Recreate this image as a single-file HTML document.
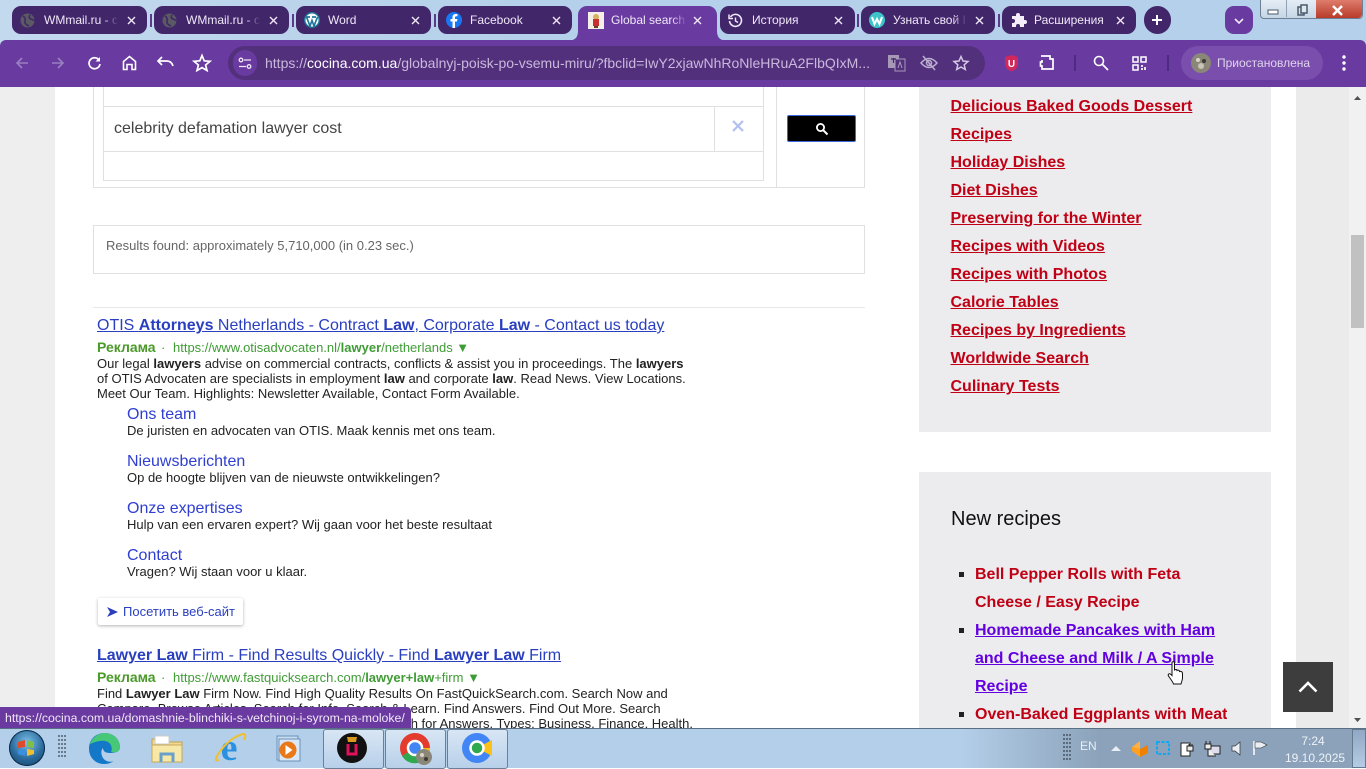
<!DOCTYPE html>
<html lang="en"><head><meta charset="utf-8"><title>Global search</title>
<style>
html,body{margin:0;padding:0;width:1366px;height:768px;overflow:hidden;background:#fff;font-family:"Liberation Sans","Noto Sans CJK SC",sans-serif}
.a{position:absolute}
.t{position:absolute;white-space:nowrap;line-height:20px}
svg{position:absolute;overflow:visible}
.tab{position:absolute;top:6px;height:28px;background:#42266a;border-radius:9px}
.tt{position:absolute;top:13px;height:15px;white-space:nowrap;overflow:hidden;font-size:12px;color:#f0e8f8;line-height:15px}
.fd{-webkit-mask-image:linear-gradient(90deg,#000 80%,transparent);mask-image:linear-gradient(90deg,#000 80%,transparent)}
.x{position:absolute;font-size:0}
.sep{position:absolute;top:14px;width:2px;height:13px;background:#5a3a8a}
.side{position:absolute;left:950.5px;font-size:16px;font-weight:bold;color:#c00014;text-decoration:underline;white-space:nowrap;line-height:20px}
.li{position:absolute;left:975px;font-size:16px;font-weight:bold;color:#c00014;white-space:nowrap;line-height:20px}
.bl{position:absolute;width:5px;height:5px;background:#222;left:959px}
.ad{position:absolute;left:97px;font-size:13px;color:#222;white-space:nowrap;line-height:15px}
.ttl{position:absolute;left:97px;font-size:16px;color:#2a3fc0;text-decoration:underline;white-space:nowrap;line-height:20px}
.gr{position:absolute;left:97px;font-size:13px;color:#3f9c35;white-space:nowrap;line-height:16px}
.gr b.r{display:inline-block;width:64px;color:#4a9a2a;font-size:14px}
.gr i{display:inline-block;width:12px;font-style:normal}
.sl{position:absolute;left:127px;font-size:16px;color:#2f3fd0;white-space:nowrap;line-height:20px}
.sd{position:absolute;left:127px;font-size:13px;color:#222;white-space:nowrap;line-height:15px}
.bd{position:absolute;background:#e0e0e0}
.tb{position:absolute;top:729px;width:59px;height:38px;border:1px solid #6b7f96;border-radius:3px;background:linear-gradient(#d8e6f4,#b8d0ea)}
</style></head><body>

<!-- page content -->
<div class="a" style="left:0;top:87px;width:55px;height:641px;background:#eeeeee"></div>
<div class="a" style="left:1296px;top:87px;width:53px;height:641px;background:#ebebeb"></div>
<div class="a" style="left:1349px;top:87px;width:17px;height:641px;background:#f1f1f1"></div>
<div class="a" style="left:1351px;top:235px;width:13px;height:93px;background:#c1c1c1"></div>
<svg style="left:1349px;top:87px" width="17" height="641"><path d="M5 13 L8.5 9 L12 13Z" fill="#505050"/><path d="M5 631 L8.5 635 L12 631Z" fill="#505050"/></svg>

<!-- search box -->
<div class="bd" style="left:93px;top:87px;width:1px;height:101px"></div>
<div class="bd" style="left:93px;top:187px;width:772px;height:1px"></div>
<div class="bd" style="left:864px;top:87px;width:1px;height:101px"></div>
<div class="bd" style="left:776px;top:87px;width:1px;height:101px"></div>
<div class="bd" style="left:103px;top:87px;width:1px;height:94px"></div>
<div class="bd" style="left:763px;top:87px;width:1px;height:94px"></div>
<div class="bd" style="left:103px;top:180px;width:661px;height:1px"></div>
<div class="bd" style="left:104px;top:106px;width:660px;height:1px"></div>
<div class="bd" style="left:104px;top:151px;width:660px;height:1px"></div>
<div class="bd" style="left:714px;top:106px;width:1px;height:46px"></div>
<div class="t" style="left:114px;top:118px;font-size:16px;color:#444;line-height:21px">celebrity defamation lawyer cost</div>
<svg style="left:732px;top:120px" width="12" height="12"><path d="M1 1L11 11M11 1L1 11" stroke="#b3c0f0" stroke-width="2.2"/></svg>
<div class="a" style="left:787px;top:115px;width:67px;height:25px;background:#000;border:1px solid #3a68d8;border-radius:2px"></div>
<svg style="left:815px;top:122px" width="14" height="14"><circle cx="5.5" cy="5.5" r="3.6" fill="none" stroke="#fff" stroke-width="1.8"/><path d="M8.2 8.2L12.5 12.5" stroke="#fff" stroke-width="2"/></svg>

<!-- results found -->
<div class="a" style="left:93px;top:225px;width:770px;height:47px;border:1px solid #e0e0e0"></div>
<div class="t" style="left:106px;top:236px;font-size:13px;color:#666">Results found: approximately 5,710,000 (in 0.23 sec.)</div>
<div class="bd" style="left:93px;top:307px;width:772px;height:1px;background:#e8e8e8"></div>

<!-- ad 1 -->
<div class="ttl" style="top:316px">OTIS <b>Attorneys</b> Netherlands - Contract <b>Law</b>, Corporate <b>Law</b> - Contact us today</div>
<div class="gr" style="top:339px"><b class="r">Реклама</b><i>·</i>https://www.otisadvocaten.nl/<b>lawyer</b>/netherlands ▼</div>
<div class="ad" style="top:356px">Our legal <b>lawyers</b> advise on commercial contracts, conflicts &amp; assist you in proceedings. The <b>lawyers</b></div>
<div class="ad" style="top:371px">of OTIS Advocaten are specialists in employment <b>law</b> and corporate <b>law</b>. Read News. View Locations.</div>
<div class="ad" style="top:386px">Meet Our Team. Highlights: Newsletter Available, Contact Form Available.</div>
<div class="sl" style="top:405px">Ons team</div>
<div class="sd" style="top:423px">De juristen en advocaten van OTIS. Maak kennis met ons team.</div>
<div class="sl" style="top:452px">Nieuwsberichten</div>
<div class="sd" style="top:470px">Op de hoogte blijven van de nieuwste ontwikkelingen?</div>
<div class="sl" style="top:499px">Onze expertises</div>
<div class="sd" style="top:517px">Hulp van een ervaren expert? Wij gaan voor het beste resultaat</div>
<div class="sl" style="top:546px">Contact</div>
<div class="sd" style="top:564px">Vragen? Wij staan voor u klaar.</div>
<div class="a" style="left:98px;top:598px;width:145px;height:27px;background:#fff;border-radius:2px;box-shadow:0 1px 3px rgba(0,0,0,.3)"></div>
<svg style="left:107px;top:607px" width="12" height="10"><path d="M0 0L11 5L0 10L3 5Z" fill="#2a3fc0"/></svg>
<div class="t" style="left:123px;top:602px;font-size:13px;color:#2a3fc0">Посетить веб-сайт</div>

<!-- ad 2 -->
<div class="ttl" style="top:646px"><b>Lawyer Law</b> Firm - Find Results Quickly - Find <b>Lawyer Law</b> Firm</div>
<div class="gr" style="top:669px"><b class="r">Реклама</b><i>·</i>https://www.fastquicksearch.com/<b>lawyer+law</b>+firm ▼</div>
<div class="ad" style="top:686px">Find <b>Lawyer Law</b> Firm Now. Find High Quality Results On FastQuickSearch.com. Search Now and</div>
<div class="ad" style="top:701px">Compare. Browse Articles. Search for Info. Search &amp; Learn. Find Answers. Find Out More. Search</div>
<div class="ad" style="top:716px;left:auto;right:673px;height:12px;overflow:hidden">Multiple Sources. Search for Information. Search for Answers. Types: Business, Finance, Health.</div>

<!-- sidebar -->
<div class="a" style="left:919px;top:87px;width:352px;height:345px;background:#ecebee"></div>
<div class="a" style="left:919px;top:472px;width:352px;height:256px;background:#ecebee"></div>
<div class="side" style="top:97px">Delicious Baked Goods Dessert</div>
<div class="side" style="top:125px">Recipes</div>
<div class="side" style="top:153px">Holiday Dishes</div>
<div class="side" style="top:181px">Diet Dishes</div>
<div class="side" style="top:209px">Preserving for the Winter</div>
<div class="side" style="top:237px">Recipes with Videos</div>
<div class="side" style="top:265px">Recipes with Photos</div>
<div class="side" style="top:293px">Calorie Tables</div>
<div class="side" style="top:321px">Recipes by Ingredients</div>
<div class="side" style="top:349px">Worldwide Search</div>
<div class="side" style="top:377px">Culinary Tests</div>
<div class="t" style="left:951px;top:509px;font-size:20px;color:#111">New recipes</div>
<div class="bl" style="top:572px"></div>
<div class="li" style="top:565px">Bell Pepper Rolls with Feta</div>
<div class="li" style="top:593px">Cheese / Easy Recipe</div>
<div class="bl" style="top:628px"></div>
<div class="li" style="top:621px;color:#6200e0;text-decoration:underline">Homemade Pancakes with Ham</div>
<div class="li" style="top:649px;color:#6200e0;text-decoration:underline">and Cheese and Milk / A Simple</div>
<div class="li" style="top:677px;color:#6200e0;text-decoration:underline">Recipe</div>
<div class="bl" style="top:712px"></div>
<div class="li" style="top:705px;height:23px;overflow:hidden">Oven-Baked Eggplants with Meat</div>

<!-- back to top -->
<div class="a" style="left:1283px;top:662px;width:50px;height:50px;background:#3d3d3d"></div>
<svg style="left:1298px;top:680px" width="20" height="14"><path d="M1.5 11.5L10 3L18.500 11.500" fill="none" stroke="#fff" stroke-width="2.600"/></svg>
<!-- cursor -->
<svg style="left:1167px;top:661px" width="18" height="24"><path d="M5 1.500C5 .5 7.500 .5 7.500 1.500V9C9 8 10 8.500 10 9.500 11 8.800 12.500 9.200 12.500 10.500 13.500 10 15.500 10.500 15.500 12.500V17C15.500 19 14.500 21 14 23H6.500C6 21 3.500 18 1.500 15 .5 13 2.500 12 4 13.500L5 14.500Z" fill="#fff" stroke="#111" stroke-width="1"/></svg>

<!-- status bubble -->
<div class="a" style="left:0;top:707px;width:411px;height:21px;background:#6a3aa0;border-radius:0 4px 0 0"></div>
<div class="t" style="left:5px;top:708px;font-size:12.3px;color:#f0e8f8">https://cocina.com.ua/domashnie-blinchiki-s-vetchinoj-i-syrom-na-moloke/</div>

<!-- browser top -->
<div class="a" style="left:0;top:0;width:1366px;height:46px;background:linear-gradient(90deg,#c3d9ee,#b4d0ea 40%,#b4d0ea)"></div>
<div class="a" style="left:0;top:40px;width:1366px;height:47px;background:#693aa0;border-radius:6px 6px 0 0"></div>

<!-- tabs -->
<div class="tab" style="left:12px;width:135px"></div>
<div class="tab" style="left:154px;width:135px"></div>
<div class="tab" style="left:296px;width:135px"></div>
<div class="tab" style="left:438px;width:134px"></div>
<div class="a" style="left:578px;top:6px;width:139px;height:35px;background:#693aa0;border-radius:9px 9px 0 0"></div>
<svg style="left:569px;top:31px" width="158" height="10"><path d="M0 9.500Q9 9.500 9 0V10H0Z" fill="#693aa0"/><path d="M148 0Q148 9.500 157 9.500V10H148Z" fill="#693aa0"/></svg>
<div class="tab" style="left:720px;width:135px"></div>
<div class="tab" style="left:861px;width:134px"></div>
<div class="tab" style="left:1002px;width:134px"></div>
<div class="a" style="left:1144px;top:6px;width:27px;height:28px;background:#42266a;border-radius:14px"></div>
<div class="a" style="left:1225px;top:6px;width:28px;height:28px;background:#693aa0;border-radius:9px"></div>
<div class="sep" style="left:150px"></div><div class="sep" style="left:292px"></div><div class="sep" style="left:434px"></div>
<div class="sep" style="left:857px"></div><div class="sep" style="left:998px"></div>

<svg style="left:20px;top:13px" width="15" height="15"><circle cx="7.500" cy="7.500" r="7" fill="#5a5a62"/><path d="M3 3Q6 5 5 8T9 13M10 2Q8 5 11 6T14 8" fill="none" stroke="#42266a" stroke-width="1.600"/></svg>
<svg style="left:162px;top:13px" width="15" height="15"><circle cx="7.500" cy="7.500" r="7" fill="#5a5a62"/><path d="M3 3Q6 5 5 8T9 13M10 2Q8 5 11 6T14 8" fill="none" stroke="#42266a" stroke-width="1.600"/></svg>
<svg style="left:304px;top:12px" width="16" height="16"><circle cx="8" cy="8" r="8" fill="#21759b"/><circle cx="8" cy="8" r="6.500" fill="#fff"/><path d="M2.500 5L6 14L8 8.500L10 14L13.500 5M2 5H6M8 5H12" fill="none" stroke="#21759b" stroke-width="1.700"/></svg>
<svg style="left:446px;top:12px" width="16" height="16"><circle cx="8" cy="8" r="8" fill="#1877f2"/><path d="M9 16V9.500H11L11.400 7H9V5.500C9 4.700 9.400 4.200 10.400 4.200H11.500V2.200C10.800 2.100 10.200 2 9.700 2 7.700 2 6.500 3.200 6.500 5.200V7H4.500V9.500H6.500V16Z" fill="#fff"/></svg>
<svg style="left:588px;top:12px" width="16" height="17"><rect width="16" height="17" fill="#f4f0e8"/><circle cx="8" cy="5" r="3" fill="#d8b060"/><rect x="5" y="7" width="6" height="7" fill="#c83030"/><rect x="6" y="14" width="4" height="2" fill="#604020"/></svg>
<svg style="left:728px;top:13px" width="15" height="15"><path d="M2.500 4A6 6 0 1 1 1.500 8" fill="none" stroke="#f0e8f8" stroke-width="1.600"/><path d="M1 1.500V5.500H5" fill="none" stroke="#f0e8f8" stroke-width="1.500"/><path d="M7.500 4.500V8L10 9.500" fill="none" stroke="#f0e8f8" stroke-width="1.400"/></svg>
<svg style="left:869px;top:12px" width="16" height="16"><circle cx="8" cy="8" r="8" fill="#3cc4c8"/><path d="M3 5L5.500 12L8 7L10.500 12L13 5" fill="none" stroke="#fff" stroke-width="2"/></svg>
<svg style="left:1011px;top:12px" width="16" height="16"><path d="M1 4H5V3A2 2 0 0 1 9 3V4H13V8H14A2 2 0 0 1 14 12H13V15H9V14A2 2 0 0 0 5 14V15H1V11H2A2 2 0 0 0 2 7H1Z" fill="#f4eef8"/></svg>

<div class="tt fd" style="left:44px;width:74px">WMmail.ru - сайт</div>
<div class="tt fd" style="left:186px;width:74px">WMmail.ru - сайт</div>
<div class="tt" style="left:328px">Word</div>
<div class="tt" style="left:470px">Facebook</div>
<div class="tt fd" style="left:611px;width:76px">Global search - Cocina</div>
<div class="tt" style="left:752px">История</div>
<div class="tt fd" style="left:893px;width:74px">Узнать свой IP</div>
<div class="tt" style="left:1034px">Расширения</div>

<svg class="x" style="left:127px;top:16px" width="9" height="9"><path d="M1 1L8 8M8 1L1 8" stroke="#f0e8f8" stroke-width="1.400"/></svg>
<svg class="x" style="left:269px;top:16px" width="9" height="9"><path d="M1 1L8 8M8 1L1 8" stroke="#f0e8f8" stroke-width="1.400"/></svg>
<svg class="x" style="left:411px;top:16px" width="9" height="9"><path d="M1 1L8 8M8 1L1 8" stroke="#f0e8f8" stroke-width="1.400"/></svg>
<svg class="x" style="left:552px;top:16px" width="9" height="9"><path d="M1 1L8 8M8 1L1 8" stroke="#f0e8f8" stroke-width="1.400"/></svg>
<svg class="x" style="left:693px;top:16px" width="9" height="9"><path d="M1 1L8 8M8 1L1 8" stroke="#f0e8f8" stroke-width="1.400"/></svg>
<svg class="x" style="left:834px;top:16px" width="9" height="9"><path d="M1 1L8 8M8 1L1 8" stroke="#f0e8f8" stroke-width="1.400"/></svg>
<svg class="x" style="left:975px;top:16px" width="9" height="9"><path d="M1 1L8 8M8 1L1 8" stroke="#f0e8f8" stroke-width="1.400"/></svg>
<svg class="x" style="left:1116px;top:16px" width="9" height="9"><path d="M1 1L8 8M8 1L1 8" stroke="#f0e8f8" stroke-width="1.400"/></svg>
<svg style="left:1151px;top:14px" width="12" height="12"><path d="M6 1V11M1 6H11" stroke="#fff" stroke-width="2"/></svg>
<svg style="left:1234px;top:18px" width="10" height="6"><path d="M1 1L5 5L9 1" fill="none" stroke="#f0e8f8" stroke-width="1.600"/></svg>

<!-- window controls -->
<div class="a" style="left:1260px;top:-2px;width:101px;height:19px;border:1px solid #6d7f92;border-radius:0 0 4px 4px;background:linear-gradient(#e6eef6,#c6d6e6)"></div>
<div class="a" style="left:1316px;top:-1px;width:46px;height:19px;background:linear-gradient(#e08070,#b83a28);border-radius:0 0 4px 0"></div>
<div class="bd" style="left:1286px;top:0;width:1px;height:17px;background:#8ea0b2"></div>
<svg style="left:1268px;top:5px" width="90" height="12"><rect x="0" y="5" width="10" height="4" fill="#fff" stroke="#4a5a6a"/><rect x="30" y="2" width="6" height="8" fill="none" stroke="#4a5a6a" stroke-width="1.500"/><rect x="33" y="0" width="6" height="8" fill="#dfe8f0" stroke="#4a5a6a" stroke-width="1.500"/><path d="M65 1L74 10M74 1L65 10" stroke="#fff" stroke-width="2.500"/></svg>

<!-- toolbar -->
<svg style="left:15px;top:56px" width="15" height="14"><path d="M13 7H2M7 2L2 7L7 12" fill="none" stroke="#9a80c0" stroke-width="1.600"/></svg>
<svg style="left:50px;top:56px" width="15" height="14"><path d="M2 7H13M8 2L13 7L8 12" fill="none" stroke="#9a80c0" stroke-width="1.600"/></svg>
<svg style="left:87px;top:56px" width="15" height="14"><path d="M12 4A5.500 5.500 0 1 0 13 8" fill="none" stroke="#fff" stroke-width="1.700"/><path d="M13 1V5.500H8.500" fill="#fff"/></svg>
<svg style="left:122px;top:55px" width="15" height="16"><path d="M1.500 6.500L7.500 1.500L13.500 6.500V14.500H10V9.500H5V14.500H1.500Z" fill="none" stroke="#fff" stroke-width="1.600"/></svg>
<svg style="left:157px;top:56px" width="18" height="13"><path d="M5 1L1 5L5 9" fill="none" stroke="#fff" stroke-width="1.700"/><path d="M2 5H10C13 5 15 7 16 10" fill="none" stroke="#fff" stroke-width="1.700"/></svg>
<svg style="left:193px;top:54px" width="18" height="18"><path d="M9 1.500L11.200 6.800L17 7.300L12.600 11L14 16.500L9 13.600L4 16.500L5.400 11L1 7.300L6.800 6.800Z" fill="none" stroke="#fff" stroke-width="1.700"/></svg>

<div class="a" style="left:228px;top:46px;width:757px;height:34px;background:#52307c;border-radius:17px"></div>
<div class="a" style="left:233px;top:50px;width:24px;height:26px;background:#693aa0;border-radius:13px"></div>
<svg style="left:238px;top:57px" width="14" height="13"><circle cx="3" cy="3" r="1.800" fill="none" stroke="#f0e8f8" stroke-width="1.300"/><path d="M6 3H13M1 9.500H8" stroke="#f0e8f8" stroke-width="1.300"/><circle cx="11" cy="9.500" r="1.800" fill="none" stroke="#f0e8f8" stroke-width="1.300"/></svg>
<div class="t" style="left:265px;top:53px;font-size:14px;color:#c9b8dc;width:610px;overflow:hidden">https://<span style="color:#fff">cocina.com.ua</span>/globalnyj-poisk-po-vsemu-miru/?fbclid=IwY2xjawNhRoNleHRuA2FlbQIxM...</div>
<svg style="left:888px;top:54px" width="18" height="18"><rect x="0" y="1" width="11" height="13" fill="#a898b8"/><rect x="7" y="5" width="10" height="12" fill="#52307c" stroke="#a898b8"/><path d="M3 5H8M5.500 4V9" stroke="#42266a" stroke-width="1.200"/><path d="M10 14L12 8L14 14" fill="none" stroke="#a898b8"/></svg>
<svg style="left:920px;top:55px" width="18" height="16"><path d="M1 8Q9 -1 17 8Q9 17 1 8Z" fill="none" stroke="#bcaed0" stroke-width="1.500"/><circle cx="9" cy="8" r="2.500" fill="none" stroke="#bcaed0" stroke-width="1.500"/><path d="M3 1L15 15" stroke="#bcaed0" stroke-width="1.500"/></svg>
<svg style="left:953px;top:55px" width="16" height="16"><path d="M8 1.500L10 6L15 6.500L11.200 9.800L12.300 14.500L8 12L3.700 14.500L4.800 9.800L1 6.500L6 6Z" fill="none" stroke="#d4c8e4" stroke-width="1.500"/></svg>
<svg style="left:1004px;top:54px" width="15" height="18"><path d="M7.500 1L14 3V10C14 14 10 16.500 7.500 17.500 5 16.500 1 14 1 10V3Z" fill="#d0285a"/><text x="7.500" y="13" font-family="Liberation Sans" font-size="10" font-weight="bold" fill="#fff" text-anchor="middle">U</text></svg>
<svg style="left:1039px;top:54px" width="17" height="18"><path d="M2 2H11V5H14V15H3V12H1.500V8H3V6" fill="none" stroke="#fff" stroke-width="1.700"/></svg>
<div class="a" style="left:1074px;top:55px;width:2px;height:16px;background:#4e2a80"></div>
<svg style="left:1093px;top:55px" width="16" height="16"><circle cx="6" cy="6" r="4.500" fill="none" stroke="#fff" stroke-width="1.600"/><path d="M9.500 9.500L15 15" stroke="#fff" stroke-width="1.800"/></svg>
<svg style="left:1132px;top:56px" width="15" height="15"><rect x="1" y="1" width="5" height="5" fill="none" stroke="#fff" stroke-width="1.500"/><rect x="9" y="1" width="5" height="5" fill="none" stroke="#fff" stroke-width="1.500"/><rect x="1" y="9" width="5" height="5" fill="none" stroke="#fff" stroke-width="1.500"/><path d="M9 9H11V11H9ZM12 11H14V14H12ZM9 12H11V14H9Z" fill="#e8dff0"/></svg>
<div class="a" style="left:1167px;top:55px;width:2px;height:16px;background:#4e2a80"></div>
<div class="a" style="left:1181px;top:46px;width:142px;height:34px;background:#7a4eac;border-radius:17px"></div>
<svg style="left:1191px;top:53px" width="20" height="20"><circle cx="10" cy="10" r="10" fill="#8a8678"/><circle cx="7" cy="7" r="2" fill="#d8d4c8"/><circle cx="13" cy="8" r="2" fill="#3c3a34"/><circle cx="10" cy="13" r="3" fill="#c8c4b8"/></svg>
<div class="t" style="left:1217px;top:53px;font-size:12px;color:#e0d4ee">Приостановлена</div>
<svg style="left:1341px;top:54px" width="6" height="18"><circle cx="3" cy="3" r="1.700" fill="#fff"/><circle cx="3" cy="9" r="1.700" fill="#fff"/><circle cx="3" cy="15" r="1.700" fill="#fff"/></svg>

<!-- taskbar -->
<div class="a" style="left:0;top:728px;width:1366px;height:40px;background:linear-gradient(90deg,#b4cfe9 0,#b4cfe9 960px,#8ba2ba 1100px,#8ba2ba 1352px)"></div>
<div class="a" style="left:0;top:728px;width:1366px;height:1px;background:#5a6e84"></div>
<div class="a" style="left:1352px;top:729px;width:14px;height:39px;background:linear-gradient(#8fa8c4,#b4cce4);border:1px solid #64788e;box-sizing:border-box"></div>

<div class="a" style="left:9px;top:730px;width:36px;height:36px;border-radius:50%;background:radial-gradient(circle at 50% 35%,#7cc0e8,#2a6a9c 55%,#123c60);box-shadow:inset 0 0 0 1px #0a2a48"></div>
<svg style="left:8px;top:730px" width="36" height="36"><path d="M10 12L17 10V17L10 18Z" fill="#e04a28"/><path d="M19 10L26 12V18L19 17Z" fill="#80c040"/><path d="M10 20L17 19V26L10 24Z" fill="#3a90e0"/><path d="M19 19L26 20V24L19 26Z" fill="#f0c030"/></svg>
<svg style="left:58px;top:734px" width="10" height="28"><g fill="#6a7a8a"><rect x="0" y="1" width="2" height="2"/><rect x="3" y="1" width="2" height="2"/><rect x="6" y="1" width="2" height="2"/><rect x="0" y="5" width="2" height="2"/><rect x="3" y="5" width="2" height="2"/><rect x="6" y="5" width="2" height="2"/><rect x="0" y="9" width="2" height="2"/><rect x="3" y="9" width="2" height="2"/><rect x="6" y="9" width="2" height="2"/><rect x="0" y="13" width="2" height="2"/><rect x="3" y="13" width="2" height="2"/><rect x="6" y="13" width="2" height="2"/><rect x="0" y="17" width="2" height="2"/><rect x="3" y="17" width="2" height="2"/><rect x="6" y="17" width="2" height="2"/><rect x="0" y="21" width="2" height="2"/><rect x="3" y="21" width="2" height="2"/><rect x="6" y="21" width="2" height="2"/></g></svg>
<svg style="left:88px;top:732px" width="33" height="32"><path d="M1 17C1 7 8 1 17 1C26 1 32 8 32 15C32 20 27 21 22 21C17 21 15 19 15 16C13 18 13 21 14 24C16 29 21 31 26 29C23 31 20 32 16 32C8 32 1 26 1 17Z" fill="#1478c8"/><path d="M17 1C26 1 32 8 32 15C32 20 27 21 23 20C25 16 23 10 17 9C11 8 5 11 2 12C4 6 10 1 17 1Z" fill="#46c878"/></svg>
<svg style="left:151px;top:733px" width="32" height="30"><path d="M1 6H12L15 9H31V28H1Z" fill="#f0d890" stroke="#c0a050"/><rect x="4" y="3" width="14" height="8" fill="#fff" stroke="#ccc"/><rect x="1" y="12" width="30" height="17" fill="#f8e8a8" stroke="#c8a858"/><path d="M10 29V21H22V29" fill="none" stroke="#6aa0c8" stroke-width="3"/></svg>
<svg style="left:214px;top:732px" width="32" height="32"><text x="15" y="28" font-family="Liberation Serif" font-size="38" font-weight="bold" fill="#2a90e0" text-anchor="middle">e</text><path d="M5 28Q0 30 3 24Q14 6 29 2Q33 2 30 8" fill="none" stroke="#f0c030" stroke-width="2"/></svg>
<svg style="left:276px;top:734px" width="26" height="28"><rect x="1" y="2" width="21" height="24" fill="#c8dcf0" stroke="#6a90b8"/><rect x="3" y="5" width="21" height="22" fill="#d8e8f8" stroke="#6a90b8"/><circle cx="12" cy="16" r="8.500" fill="#e87818"/><path d="M9.500 11L16.500 16L9.500 21Z" fill="#fff"/></svg>

<div class="tb" style="left:323px"></div><div class="tb" style="left:385px"></div><div class="tb" style="left:447px"></div>
<svg style="left:337px;top:733px" width="30" height="30"><circle cx="15" cy="15" r="15" fill="#111"/><path d="M10 4H20L19 9H11Z" fill="#d89820"/><path d="M11 11V21H19V11" fill="none" stroke="#e0105a" stroke-width="3"/></svg>
<svg style="left:399px;top:732px" width="34" height="34"><circle cx="16" cy="16" r="15" fill="#e33b2e"/><path d="M16 16L3 24A15 15 0 0 0 22 30Z" fill="#2fa84f"/><path d="M16 16H31A15 15 0 0 1 22 30Z" fill="#fbc116"/><circle cx="16" cy="16" r="7" fill="#4285f4" stroke="#fff" stroke-width="2.500"/><circle cx="25" cy="25" r="8" fill="#8a8678"/><circle cx="23" cy="23" r="2" fill="#d8d4c8"/><circle cx="27" cy="27" r="2" fill="#3c3a34"/></svg>
<svg style="left:462px;top:733px" width="30" height="30"><circle cx="15" cy="15" r="15" fill="#4285f4"/><path d="M15 15L30 7V23Z" fill="#fbc116"/><circle cx="15" cy="15" r="6.500" fill="#2fa84f" stroke="#fff" stroke-width="2.500"/></svg>

<svg style="left:1063px;top:733px" width="10" height="30"><g fill="#5a6a7a"><rect x="0" y="1" width="2" height="2"/><rect x="3" y="1" width="2" height="2"/><rect x="6" y="1" width="2" height="2"/><rect x="0" y="5" width="2" height="2"/><rect x="3" y="5" width="2" height="2"/><rect x="6" y="5" width="2" height="2"/><rect x="0" y="9" width="2" height="2"/><rect x="3" y="9" width="2" height="2"/><rect x="6" y="9" width="2" height="2"/><rect x="0" y="13" width="2" height="2"/><rect x="3" y="13" width="2" height="2"/><rect x="6" y="13" width="2" height="2"/><rect x="0" y="17" width="2" height="2"/><rect x="3" y="17" width="2" height="2"/><rect x="6" y="17" width="2" height="2"/><rect x="0" y="21" width="2" height="2"/><rect x="3" y="21" width="2" height="2"/><rect x="6" y="21" width="2" height="2"/><rect x="0" y="25" width="2" height="2"/><rect x="3" y="25" width="2" height="2"/><rect x="6" y="25" width="2" height="2"/></g></svg>
<div class="t" style="left:1080px;top:736px;font-size:12px;color:#e8eef4">EN</div>
<svg style="left:1111px;top:746px" width="10" height="6"><path d="M0 5L5 0L10 5Z" fill="#e8eef4"/></svg>
<svg style="left:1132px;top:741px" width="16" height="16"><path d="M0 6L8 0L8 8Z" fill="#ffb040"/><path d="M8 8L16 4V12L8 16Z" fill="#f08000"/><path d="M0 6L8 8V16L0 10Z" fill="#ffa020"/></svg>
<svg style="left:1156px;top:741px" width="15" height="15"><rect x="1" y="1" width="12" height="12" fill="none" stroke="#10a8f0" stroke-width="2" stroke-dasharray="3 1.500"/></svg>
<svg style="left:1180px;top:741px" width="15" height="16"><rect x="1" y="2" width="9" height="13" fill="#fff" stroke="#222"/><path d="M7 5H13V10H7ZM9 3V5M12 3V5" fill="#e8e8e8" stroke="#222"/></svg>
<svg style="left:1204px;top:741px" width="17" height="16"><rect x="5" y="5" width="11" height="8" fill="#dde" stroke="#222"/><path d="M2 0V3M6 0V3M1 3H7V8H1ZM4 8V15H12" fill="#eee" stroke="#222"/></svg>
<svg style="left:1232px;top:741px" width="10" height="15"><path d="M0 5H3L8 1V14L3 10H0Z" fill="#e8eef4" stroke="#333" stroke-width=".7"/></svg>
<svg style="left:1252px;top:741px" width="16" height="15"><path d="M2 0V14" stroke="#fff" stroke-width="1.500"/><path d="M3 1H9L15 4L9 7H3Z" fill="#e8eef4" stroke="#333" stroke-width=".6"/></svg>
<div class="t" style="left:1293px;top:731px;font-size:12px;color:#eef2f6;width:40px;text-align:center;line-height:20px">7:24</div>
<div class="t" style="left:1285px;top:748px;font-size:12px;color:#eef2f6">19.10.2025</div>

</body></html>
